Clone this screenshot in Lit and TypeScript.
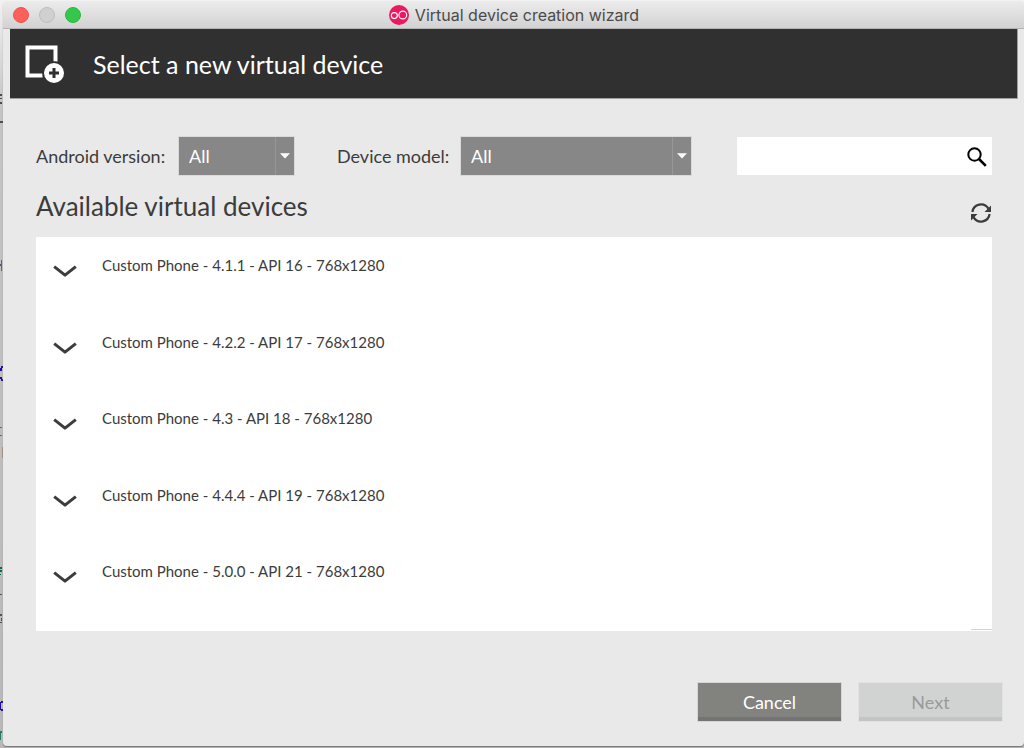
import { LitElement, html, css, svg } from "lit";
import { customElement, property, state } from "lit/decorators.js";

interface Device {
  name: string;
  android: string;
  api: number;
  size: string;
}

const DEVICES: Device[] = [
  { name: "Custom Phone", android: "4.1.1", api: 16, size: "768x1280" },
  { name: "Custom Phone", android: "4.2.2", api: 17, size: "768x1280" },
  { name: "Custom Phone", android: "4.3", api: 18, size: "768x1280" },
  { name: "Custom Phone", android: "4.4.4", api: 19, size: "768x1280" },
  { name: "Custom Phone", android: "5.0.0", api: 21, size: "768x1280" },
];

/* Specks of the desktop that show in the sliver beside the window. */
const SPECKS = [
  { x: 0, y: 94, w: 2, h: 2, color: "#4c4c58" },
  { x: 0, y: 98, w: 2, h: 1, color: "#4c4c58" },
  { x: 0, y: 102, w: 2, h: 2, color: "#4c4c58" },
  { x: 0, y: 121, w: 3, h: 2, color: "#4c4c4c" },
  { x: 0, y: 264, w: 2, h: 2, color: "#4a5a78" },
  { x: 1, y: 260, w: 1, h: 11, color: "#5a6a84" },
  { x: 1, y: 366, w: 2, h: 2, color: "#1c0ca0" },
  { x: 0, y: 368, w: 2, h: 3, color: "#1c0ca0" },
  { x: 0, y: 377, w: 2, h: 2, color: "#1c0ca0" },
  { x: 1, y: 379, w: 2, h: 2, color: "#1c0ca0" },
  { x: 0, y: 427, w: 2, h: 1, color: "#666666" },
  { x: 0, y: 435, w: 2, h: 1, color: "#666666" },
  { x: 2, y: 447, w: 1, h: 11, color: "#b09080" },
  { x: 0, y: 567, w: 2, h: 2, color: "#0c6c44" },
  { x: 0, y: 570, w: 2, h: 2, color: "#0c6c44" },
  { x: 0, y: 574, w: 1, h: 1, color: "#0c6c44" },
  { x: 0, y: 594, w: 2, h: 1, color: "#555555" },
  { x: 0, y: 614, w: 2, h: 2, color: "#555555" },
  { x: 1, y: 618, w: 1, h: 3, color: "#555555" },
  { x: 0, y: 622, w: 2, h: 1, color: "#555555" },
  { x: 0, y: 702, w: 1, h: 8, color: "#1c0ca0" },
  { x: 1, y: 701, w: 2, h: 2, color: "#1c0ca0" },
  { x: 1, y: 709, w: 2, h: 2, color: "#1c0ca0" },
  { x: 0, y: 731, w: 2, h: 2, color: "#1c7c6c" },
  { x: 0, y: 733, w: 1, h: 7, color: "#1c7c6c" },
];

@customElement("filter-select")
class FilterSelect extends LitElement {
  @property() label = "";
  @property({ type: Array }) options: string[] = [];
  @property({ reflect: true }) size = "small";

  static styles = css`
    :host {
      display: flex;
      align-items: center;
      justify-content: space-between;
    }
    .label {
      font-size: 18px;
      line-height: 24px;
      white-space: nowrap;
    }
    .box {
      display: grid;
      grid-template-columns: 1fr 19px;
      width: 115px;
      height: 38px;
      background: #878787;
      color: #fff;
      outline: 1px solid #dadada;
    }
    :host([size="large"]) .box {
      width: 230px;
    }
    .select {
      grid-area: 1 / 1 / 2 / 3;
      appearance: none;
      width: 100%;
      min-width: 0;
      border: 0;
      border-radius: 0;
      padding: 0 26px 0 10px;
      background: transparent;
      color: inherit;
      font: inherit;
      font-size: 18px;
    }
    .select option {
      color: #333;
    }
    .arrow {
      grid-area: 1 / 2 / 2 / 3;
      display: flex;
      align-items: center;
      justify-content: center;
      border-left: 1px solid #979797;
      pointer-events: none;
    }
  `;

  render() {
    return html`
      <label class="label" for="choice">${this.label}</label>
      <div class="box">
        <select class="select" id="choice">
          ${this.options.map((o) => html`<option>${o}</option>`)}
        </select>
        <span class="arrow">
          <svg width="10" height="6" viewBox="0 0 10 6" aria-hidden="true">
            <path d="M0 .3h10L5 5.6z" fill="#fff" />
          </svg>
        </span>
      </div>
    `;
  }
}

@customElement("device-row")
class DeviceRow extends LitElement {
  @property({ type: Object }) device!: Device;
  @state() private open = false;

  static styles = css`
    :host {
      display: flex;
      align-items: flex-start;
      gap: 25px;
    }
    .toggle {
      display: flex;
      margin: 0;
      padding: 17px 0 6px;
      border: 0;
      background: none;
      cursor: pointer;
    }
    .name {
      margin: 0;
      font-size: 15px;
      line-height: 24px;
      font-weight: 400;
      padding-top: 5px;
    }
  `;

  render() {
    const d = this.device;
    return html`
      <button
        class="toggle"
        aria-label="Details"
        aria-expanded=${this.open}
        @click=${() => (this.open = !this.open)}
      >
        <svg width="24" height="13" viewBox="0 0 24 13" aria-hidden="true">
          <path d="M1.2 1.6L12 10.2 22.8 1.6" fill="none" stroke="#3c3c3b" stroke-width="3" stroke-linejoin="round" />
        </svg>
      </button>
      <p class="name">${d.name} - ${d.android} - API ${d.api} - ${d.size}</p>
    `;
  }
}

@customElement("app-root")
class AppRoot extends LitElement {
  static styles = css`
    :host {
      display: flex;
      position: relative;
      box-sizing: border-box;
      min-height: 100vh;
      padding: 1px 0 2px 3px;
      overflow: hidden;
      background: linear-gradient(#f2f2f2, #c4c4c4 110px, #b8b8b8);
      font-family: Lato, "Noto Sans", sans-serif;
      color: #3c3c3b;
    }
    .edge {
      position: absolute;
      inset: 0 auto auto 0;
    }
    .window {
      position: relative;
      display: flex;
      flex-direction: column;
      flex: 1;
      min-width: 0;
      border-radius: 5px 5px 4px 4px;
      overflow: hidden;
      background: #e9e9e9;
      box-shadow: 0 1px 1px #777;
    }
    .titlebar {
      display: grid;
      grid-template-columns: 1fr auto 1fr;
      align-items: center;
      height: 28px;
      box-sizing: border-box;
      padding: 1px 9px 0 10px;
      border-bottom: 1px solid #b4b4b4;
      background: linear-gradient(#ececec, #d2d2d2);
    }
    .lights {
      display: flex;
      gap: 10px;
    }
    .light {
      width: 16px;
      height: 16px;
      padding: 0;
      border: 1px solid;
      border-radius: 50%;
    }
    .close {
      background: #fc605b;
      border-color: #ee554f;
    }
    .minimize {
      background: #d0d0d0;
      border-color: #bebebe;
    }
    .zoom {
      background: #34c84a;
      border-color: #2bb741;
    }
    .caption {
      display: flex;
      align-items: center;
      gap: 6px;
      font: 16px/24px Inter, "Noto Sans", sans-serif;
      color: #4b4b4b;
      white-space: nowrap;
    }
    .banner {
      display: flex;
      align-items: center;
      gap: 29px;
      height: 69px;
      margin: 0 7px;
      padding-left: 15px;
      background: #303030;
      color: #fff;
      box-shadow: 0 0 0 1px #a0a0a0;
      clip-path: inset(0 -1px -1px 0);
    }
    .banner-title {
      margin: 0;
      font-size: 25px;
      line-height: 32px;
      font-weight: 400;
    }
    .main {
      display: flex;
      flex-direction: column;
      flex: 1;
      padding: 39px 32px 0 33px;
    }
    .filters {
      display: flex;
    }
    .version {
      width: 258px;
      margin-right: 43px;
    }
    .model {
      width: 354px;
    }
    .search {
      display: flex;
      align-items: center;
      width: 255px;
      height: 38px;
      margin-left: auto;
      background: #fff;
    }
    .search-input {
      flex: 1;
      min-width: 0;
      height: 100%;
      box-sizing: border-box;
      border: 0;
      padding: 0 8px;
      background: none;
      font: inherit;
      font-size: 18px;
    }
    .icon-button {
      display: flex;
      padding: 0;
      border: 0;
      background: none;
      color: inherit;
      cursor: pointer;
    }
    .search-button {
      padding: 1px 5px 0 0;
      color: #000;
    }
    .list-head {
      display: flex;
      align-items: center;
      justify-content: space-between;
      height: 62px;
    }
    .list-title {
      margin: 0;
      font-size: 26px;
      line-height: 32px;
      font-weight: 400;
    }
    .refresh {
      padding: 14px 1px 0 0;
    }
    .list {
      position: relative;
      display: flex;
      flex-direction: column;
      flex: 1;
      margin: 0;
      padding: 11px 17px 0;
      list-style: none;
      background: #fff;
    }
    .item {
      flex: 1;
    }
    .corner {
      position: absolute;
      right: 0;
      bottom: 0;
      width: 21px;
      height: 1px;
      border-top: 1px solid #d2d2d2;
    }
    .actions {
      display: flex;
      justify-content: flex-end;
      gap: 18px;
      padding: 52px 22px 25px;
    }
    .button {
      width: 143px;
      height: 38px;
      padding: 0;
      border: 0;
      box-shadow: inset 0 -4px #747474;
      background: #82827f;
      color: #fff;
      font: inherit;
      font-size: 18px;
      line-height: 38px;
      outline: 1px solid #d6d6d6;
    }
    .button:disabled {
      box-shadow: inset 0 -4px #c4c4c4;
      background: #d1d3d2;
      color: #9a9a9a;
      outline-color: #e2e2e2;
    }
  `;

  private icons = {
    logo: svg`
      <circle cx="10" cy="10" r="10" fill="#eb1a60" />
      <g fill="none" stroke="#fff" stroke-width="1.1">
        <circle cx="5.3" cy="10.6" r="3" />
        <circle cx="13.8" cy="10" r="3.9" />
      </g>`,
    add: svg`
      <path d="M17.500 30.500H2.500V2.500H30.500V16.500" fill="none" stroke="#fff" stroke-width="4" />
      <circle cx="29" cy="28" r="11.500" fill="#303030" />
      <circle cx="29" cy="28" r="10" fill="#fff" />
      <path d="M29 23v10M24 28h10" stroke="#303030" stroke-width="3" />`,
    search: svg`
      <circle cx="7.500" cy="7.500" r="6.200" fill="none" stroke="currentColor" stroke-width="2" />
      <path d="M12 12l6.800 6.800" stroke="currentColor" stroke-width="2.600" />`,
    refresh: svg`
      <g fill="none" stroke="currentColor" stroke-width="2.200">
        <path d="M1.400 9A8.700 8.700 0 0 1 17.400 5.600" />
        <path d="M18.600 11A8.700 8.700 0 0 1 2.600 14.400" />
      </g>
      <path d="M20 2.500V9H13.500zM0 17.500V11h6.500z" fill="currentColor" />`,
  };

  render() {
    return html`
      <svg class="edge" width="3" height="748" viewBox="0 0 3 748" aria-hidden="true">
        ${SPECKS.map((s) => svg`<rect x=${s.x} y=${s.y} width=${s.w} height=${s.h} fill=${s.color} />`)}
      </svg>
      <div class="window">
        <header class="titlebar">
          <div class="lights">
            <button class="light close" aria-label="Close"></button>
            <button class="light minimize" aria-label="Minimize" disabled></button>
            <button class="light zoom" aria-label="Zoom"></button>
          </div>
          <div class="caption">
            <svg width="20" height="20" viewBox="0 0 20 20" aria-hidden="true">${this.icons.logo}</svg>
            <span>Virtual device creation wizard</span>
          </div>
        </header>
        <div class="banner">
          <svg width="39" height="38" viewBox="0 0 39 38" aria-hidden="true">${this.icons.add}</svg>
          <h1 class="banner-title">Select a new virtual device</h1>
        </div>
        <main class="main">
          <div class="filters">
            <filter-select class="version" label="Android version:" .options=${["All"]}></filter-select>
            <filter-select class="model" size="large" label="Device model:" .options=${["All"]}></filter-select>
            <div class="search">
              <input class="search-input" type="search" aria-label="Search devices" />
              <button class="icon-button search-button" aria-label="Search">
                <svg width="20" height="20" viewBox="0 0 20 20" aria-hidden="true">${this.icons.search}</svg>
              </button>
            </div>
          </div>
          <div class="list-head">
            <h2 class="list-title">Available virtual devices</h2>
            <button class="icon-button refresh" aria-label="Refresh">
              <svg width="20" height="20" viewBox="0 0 20 20" aria-hidden="true">${this.icons.refresh}</svg>
            </button>
          </div>
          <ul class="list">
            ${DEVICES.map((d) => html`<li class="item"><device-row .device=${d}></device-row></li>`)}
            <li class="corner" role="presentation"></li>
          </ul>
        </main>
        <footer class="actions">
          <button class="button">Cancel</button>
          <button class="button" disabled>Next</button>
        </footer>
      </div>
    `;
  }
}
